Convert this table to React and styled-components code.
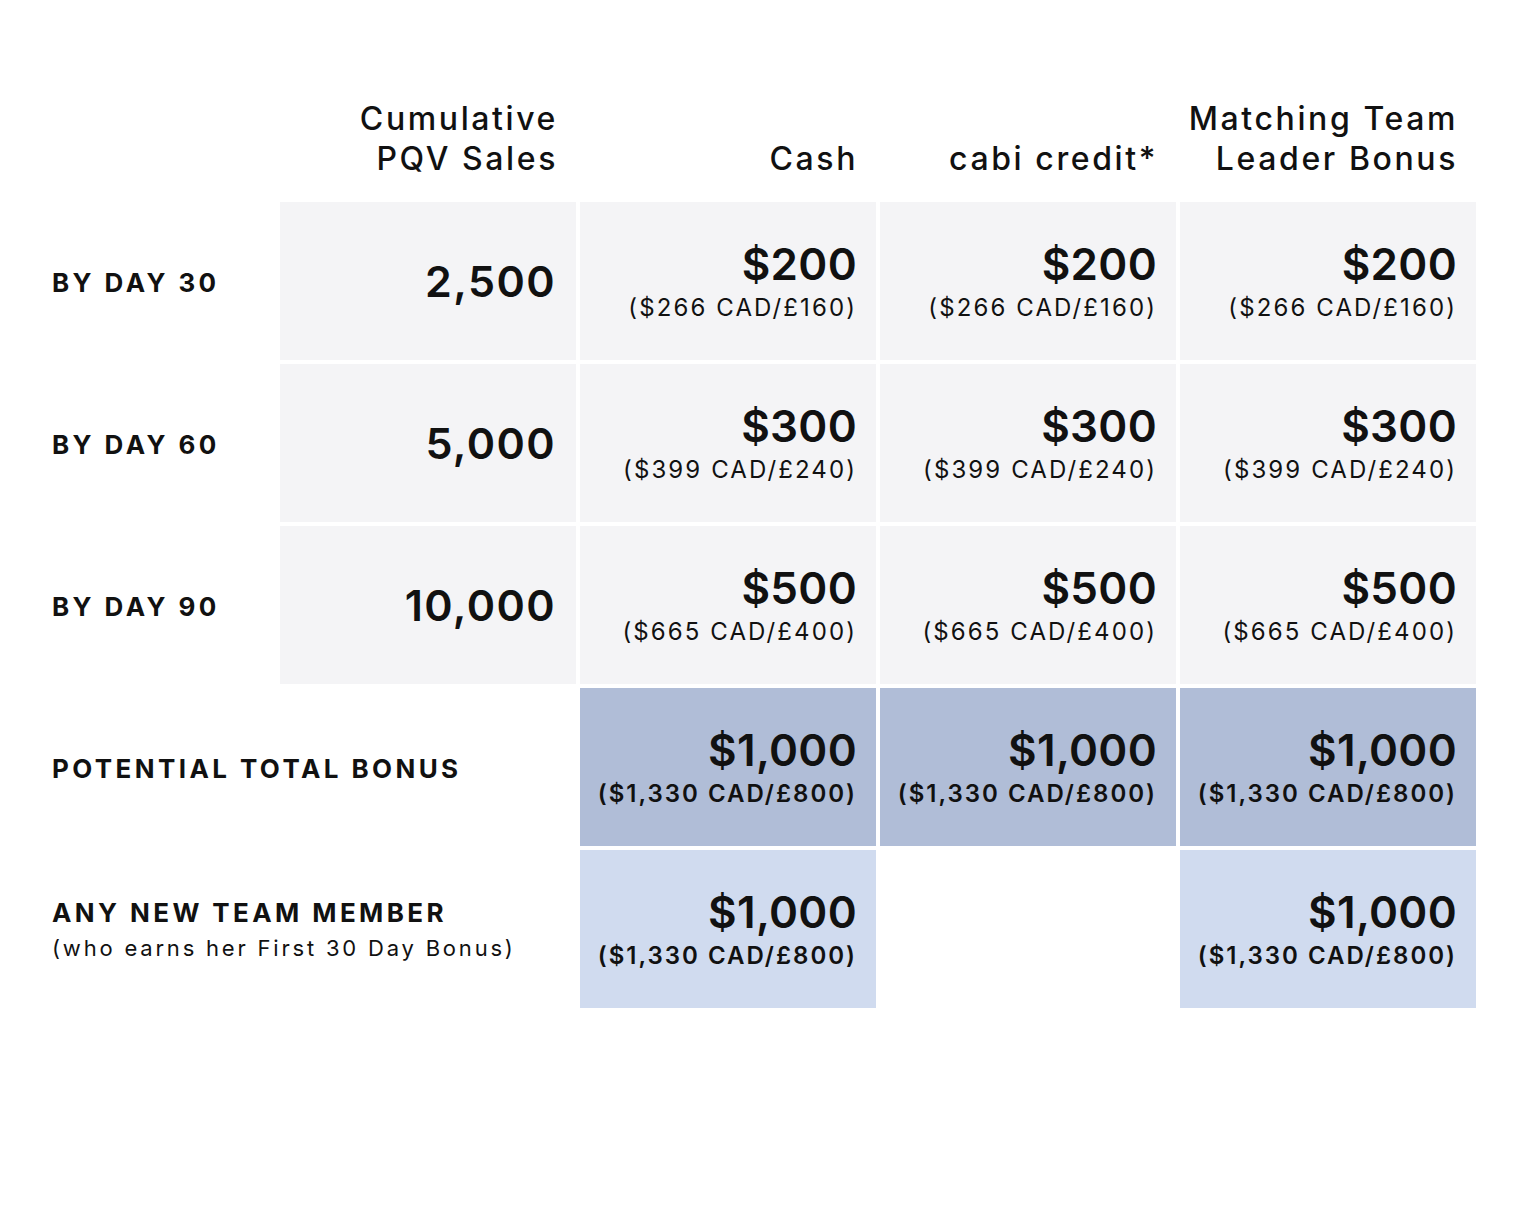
import React from "react";
import styled, { createGlobalStyle } from "styled-components";

const GlobalStyle = createGlobalStyle`
  body {
    margin: 0;
    background: #ffffff;
    font-family: Inter, "Liberation Sans", sans-serif;
    color: #111111;
  }
`;

const Page = styled.div`
  width: 1528px;
  height: 1208px;
  padding: 100px 52px 0;
  box-sizing: border-box;
`;

const Grid = styled.div`
  display: grid;
  grid-template-columns: 224px repeat(4, 296px);
  grid-template-rows: 98px;
  grid-auto-rows: 158px;
  gap: 4px;
`;

const Corner = styled.div`
  grid-row: 1;
  grid-column: 1;
`;

const Header = styled.div`
  grid-row: 1;
  grid-column: ${(p) => p.$col};
  display: flex;
  align-items: flex-end;
  justify-content: flex-end;
  text-align: right;
  padding: 0 18px 19px 0;
  font-size: 32px;
  font-weight: 500;
  line-height: 40px;
  letter-spacing: 2.6px;
`;

const Label = styled.div`
  display: flex;
  flex-direction: column;
  justify-content: center;
  padding-top: 3px;
  grid-column: ${(p) => (p.$wide ? "1 / span 2" : "1")};
  font-size: 26px;
  font-weight: 700;
  letter-spacing: 3.4px;
  line-height: 34px;
`;

const Note = styled.span`
  font-size: 22px;
  font-weight: 400;
  letter-spacing: 2.8px;
  line-height: 36px;
`;

const Cell = styled.div`
  grid-column: ${(p) => p.$col};
  background: ${(p) =>
    p.$tone === "dark" ? "#b0bdd7" : p.$tone === "light" ? "#d0dbef" : "#f4f4f6"};
  display: flex;
  flex-direction: column;
  justify-content: center;
  align-items: flex-end;
  padding-right: 19px;
  text-align: right;
`;

const Qty = styled.div`
  font-size: 43px;
  font-weight: 600;
  letter-spacing: 1.4px;
  margin-right: 1px;
`;

const MoneyBox = styled.div`
  display: flex;
  flex-direction: column;
  align-items: flex-end;
  padding-top: 7px;
`;

const Amount = styled.div`
  font-size: 44px;
  font-weight: 600;
  line-height: 46px;
  letter-spacing: 0.3px;
`;

const Sub = styled.div`
  font-size: 24px;
  font-weight: ${(p) => (p.$bold ? 600 : 400)};
  line-height: 42px;
  letter-spacing: ${(p) => (p.$bold ? "2px" : "2.1px")};
`;

const rows = [
  { label: "BY DAY 30", qty: "2,500", amt: "$200", sub: "($266 CAD/£160)" },
  { label: "BY DAY 60", qty: "5,000", amt: "$300", sub: "($399 CAD/£240)" },
  { label: "BY DAY 90", qty: "10,000", amt: "$500", sub: "($665 CAD/£400)" },
];

function Money({ amt, sub, bold }) {
  return (
    <MoneyBox>
      <Amount>{amt}</Amount>
      <Sub $bold={bold}>{sub}</Sub>
    </MoneyBox>
  );
}

export default function App() {
  return (
    <>
      <GlobalStyle />
      <Page>
        <Grid>
          <Corner />
          <Header $col={2}>
            Cumulative
            <br />
            PQV Sales
          </Header>
          <Header $col={3}>Cash</Header>
          <Header $col={4}>cabi credit*</Header>
          <Header $col={5}>
            Matching Team
            <br />
            Leader Bonus
          </Header>

          {rows.map((r) => (
            <React.Fragment key={r.label}>
              <Label>{r.label}</Label>
              <Cell $col={2}>
                <Qty>{r.qty}</Qty>
              </Cell>
              {[3, 4, 5].map((c) => (
                <Cell key={c} $col={c}>
                  <Money amt={r.amt} sub={r.sub} />
                </Cell>
              ))}
            </React.Fragment>
          ))}

          <Label $wide>POTENTIAL TOTAL BONUS</Label>
          {[3, 4, 5].map((c) => (
            <Cell key={c} $col={c} $tone="dark">
              <Money amt="$1,000" sub="($1,330 CAD/£800)" bold />
            </Cell>
          ))}

          <Label $wide>
            ANY NEW TEAM MEMBER
            <Note>(who earns her First 30 Day Bonus)</Note>
          </Label>
          <Cell $col={3} $tone="light">
            <Money amt="$1,000" sub="($1,330 CAD/£800)" bold />
          </Cell>
          <Cell $col={5} $tone="light">
            <Money amt="$1,000" sub="($1,330 CAD/£800)" bold />
          </Cell>
        </Grid>
      </Page>
    </>
  );
}
